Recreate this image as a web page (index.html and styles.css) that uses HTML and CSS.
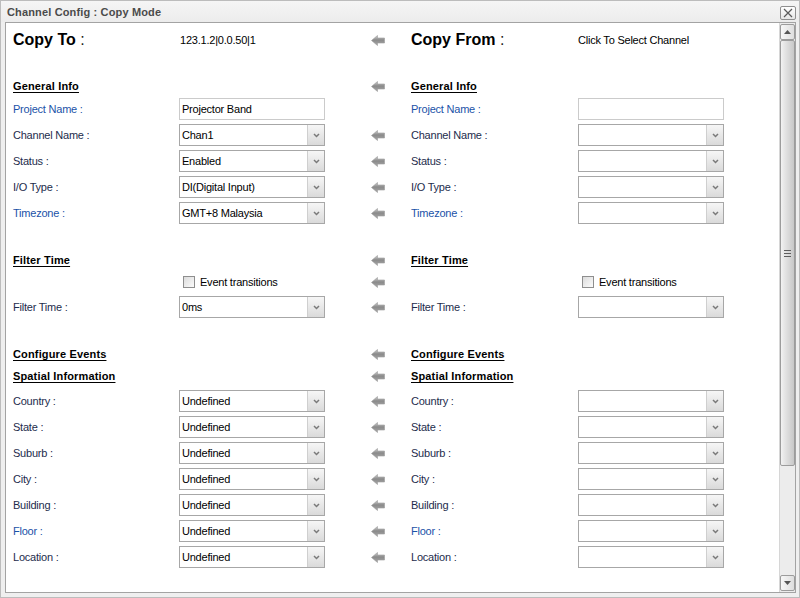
FILE: index.html
```html
<!DOCTYPE html>
<html>
<head>
<meta charset="utf-8">
<link rel="stylesheet" href="styles.css">
</head>
<body>
<div class="window">
  <div class="titlebar">
    <span class="title">Channel Config : Copy Mode</span>
    <div class="close"><svg width="10" height="10" viewBox="0 0 10 10"><path d="M1 1 L9 9 M9 1 L1 9" stroke="#5a5a5a" stroke-width="1.2" fill="none"/></svg></div>
  </div>
  <div class="panel">
    <div class="content">
      <div class="row top">
        <div class="lc big"><b>Copy To</b> :</div>
        <div class="lf val">123.1.2|0.0.50|1</div>
        <div class="ar"><svg class="arrow" width="14" height="11" viewBox="0 0 14 11"><use href="#arr"/></svg></div>
        <div class="rc big"><b>Copy From</b> :</div>
        <div class="rf val rv">Click To Select Channel</div>
      </div>

      <div class="row head gi">
        <div class="lc h">General Info</div>
        <div class="ar"><svg class="arrow" width="14" height="11" viewBox="0 0 14 11"><use href="#arr"/></svg></div>
        <div class="rc h">General Info</div>
      </div>
      <div class="row field first">
        <div class="lc lbl blue">Project Name :</div>
        <div class="lf"><div class="input">Projector Band</div></div>
        <div class="rc lbl blue">Project Name :</div>
        <div class="rf"><div class="input"></div></div>
      </div>
      <div class="row field">
        <div class="lc lbl">Channel Name :</div>
        <div class="lf"><div class="select"><span class="txt">Chan1</span><span class="btn"><svg width="7" height="5" viewBox="0 0 7 5"><use href="#chev"/></svg></span></div></div>
        <div class="ar"><svg class="arrow" width="14" height="11" viewBox="0 0 14 11"><use href="#arr"/></svg></div>
        <div class="rc lbl">Channel Name :</div>
        <div class="rf"><div class="select"><span class="txt"></span><span class="btn"><svg width="7" height="5" viewBox="0 0 7 5"><use href="#chev"/></svg></span></div></div>
      </div>
      <div class="row field">
        <div class="lc lbl">Status :</div>
        <div class="lf"><div class="select"><span class="txt">Enabled</span><span class="btn"><svg width="7" height="5" viewBox="0 0 7 5"><use href="#chev"/></svg></span></div></div>
        <div class="ar"><svg class="arrow" width="14" height="11" viewBox="0 0 14 11"><use href="#arr"/></svg></div>
        <div class="rc lbl">Status :</div>
        <div class="rf"><div class="select"><span class="txt"></span><span class="btn"><svg width="7" height="5" viewBox="0 0 7 5"><use href="#chev"/></svg></span></div></div>
      </div>
      <div class="row field">
        <div class="lc lbl">I/O Type :</div>
        <div class="lf"><div class="select"><span class="txt">DI(Digital Input)</span><span class="btn"><svg width="7" height="5" viewBox="0 0 7 5"><use href="#chev"/></svg></span></div></div>
        <div class="ar"><svg class="arrow" width="14" height="11" viewBox="0 0 14 11"><use href="#arr"/></svg></div>
        <div class="rc lbl">I/O Type :</div>
        <div class="rf"><div class="select"><span class="txt"></span><span class="btn"><svg width="7" height="5" viewBox="0 0 7 5"><use href="#chev"/></svg></span></div></div>
      </div>
      <div class="row field">
        <div class="lc lbl blue">Timezone :</div>
        <div class="lf"><div class="select"><span class="txt">GMT+8 Malaysia</span><span class="btn"><svg width="7" height="5" viewBox="0 0 7 5"><use href="#chev"/></svg></span></div></div>
        <div class="ar"><svg class="arrow" width="14" height="11" viewBox="0 0 14 11"><use href="#arr"/></svg></div>
        <div class="rc lbl blue">Timezone :</div>
        <div class="rf"><div class="select"><span class="txt"></span><span class="btn"><svg width="7" height="5" viewBox="0 0 7 5"><use href="#chev"/></svg></span></div></div>
      </div>

      <div class="row head sec">
        <div class="lc h">Filter Time</div>
        <div class="ar"><svg class="arrow" width="14" height="11" viewBox="0 0 14 11"><use href="#arr"/></svg></div>
        <div class="rc h">Filter Time</div>
      </div>
      <div class="row head after">
        <div class="lf chk"><span class="box"></span>Event transitions</div>
        <div class="ar"><svg class="arrow" width="14" height="11" viewBox="0 0 14 11"><use href="#arr"/></svg></div>
        <div class="rf chk"><span class="box"></span>Event transitions</div>
      </div>
      <div class="row field">
        <div class="lc lbl">Filter Time :</div>
        <div class="lf"><div class="select"><span class="txt">0ms</span><span class="btn"><svg width="7" height="5" viewBox="0 0 7 5"><use href="#chev"/></svg></span></div></div>
        <div class="ar"><svg class="arrow" width="14" height="11" viewBox="0 0 14 11"><use href="#arr"/></svg></div>
        <div class="rc lbl">Filter Time :</div>
        <div class="rf"><div class="select"><span class="txt"></span><span class="btn"><svg width="7" height="5" viewBox="0 0 7 5"><use href="#chev"/></svg></span></div></div>
      </div>

      <div class="row head sec">
        <div class="lc h">Configure Events</div>
        <div class="ar"><svg class="arrow" width="14" height="11" viewBox="0 0 14 11"><use href="#arr"/></svg></div>
        <div class="rc h">Configure Events</div>
      </div>
      <div class="row head after">
        <div class="lc h">Spatial Information</div>
        <div class="ar"><svg class="arrow" width="14" height="11" viewBox="0 0 14 11"><use href="#arr"/></svg></div>
        <div class="rc h">Spatial Information</div>
      </div>
      <div class="row field">
        <div class="lc lbl">Country :</div>
        <div class="lf"><div class="select"><span class="txt">Undefined</span><span class="btn"><svg width="7" height="5" viewBox="0 0 7 5"><use href="#chev"/></svg></span></div></div>
        <div class="ar"><svg class="arrow" width="14" height="11" viewBox="0 0 14 11"><use href="#arr"/></svg></div>
        <div class="rc lbl">Country :</div>
        <div class="rf"><div class="select"><span class="txt"></span><span class="btn"><svg width="7" height="5" viewBox="0 0 7 5"><use href="#chev"/></svg></span></div></div>
      </div>
      <div class="row field">
        <div class="lc lbl">State :</div>
        <div class="lf"><div class="select"><span class="txt">Undefined</span><span class="btn"><svg width="7" height="5" viewBox="0 0 7 5"><use href="#chev"/></svg></span></div></div>
        <div class="ar"><svg class="arrow" width="14" height="11" viewBox="0 0 14 11"><use href="#arr"/></svg></div>
        <div class="rc lbl">State :</div>
        <div class="rf"><div class="select"><span class="txt"></span><span class="btn"><svg width="7" height="5" viewBox="0 0 7 5"><use href="#chev"/></svg></span></div></div>
      </div>
      <div class="row field">
        <div class="lc lbl">Suburb :</div>
        <div class="lf"><div class="select"><span class="txt">Undefined</span><span class="btn"><svg width="7" height="5" viewBox="0 0 7 5"><use href="#chev"/></svg></span></div></div>
        <div class="ar"><svg class="arrow" width="14" height="11" viewBox="0 0 14 11"><use href="#arr"/></svg></div>
        <div class="rc lbl">Suburb :</div>
        <div class="rf"><div class="select"><span class="txt"></span><span class="btn"><svg width="7" height="5" viewBox="0 0 7 5"><use href="#chev"/></svg></span></div></div>
      </div>
      <div class="row field">
        <div class="lc lbl">City :</div>
        <div class="lf"><div class="select"><span class="txt">Undefined</span><span class="btn"><svg width="7" height="5" viewBox="0 0 7 5"><use href="#chev"/></svg></span></div></div>
        <div class="ar"><svg class="arrow" width="14" height="11" viewBox="0 0 14 11"><use href="#arr"/></svg></div>
        <div class="rc lbl">City :</div>
        <div class="rf"><div class="select"><span class="txt"></span><span class="btn"><svg width="7" height="5" viewBox="0 0 7 5"><use href="#chev"/></svg></span></div></div>
      </div>
      <div class="row field">
        <div class="lc lbl">Building :</div>
        <div class="lf"><div class="select"><span class="txt">Undefined</span><span class="btn"><svg width="7" height="5" viewBox="0 0 7 5"><use href="#chev"/></svg></span></div></div>
        <div class="ar"><svg class="arrow" width="14" height="11" viewBox="0 0 14 11"><use href="#arr"/></svg></div>
        <div class="rc lbl">Building :</div>
        <div class="rf"><div class="select"><span class="txt"></span><span class="btn"><svg width="7" height="5" viewBox="0 0 7 5"><use href="#chev"/></svg></span></div></div>
      </div>
      <div class="row field">
        <div class="lc lbl blue">Floor :</div>
        <div class="lf"><div class="select"><span class="txt">Undefined</span><span class="btn"><svg width="7" height="5" viewBox="0 0 7 5"><use href="#chev"/></svg></span></div></div>
        <div class="ar"><svg class="arrow" width="14" height="11" viewBox="0 0 14 11"><use href="#arr"/></svg></div>
        <div class="rc lbl blue">Floor :</div>
        <div class="rf"><div class="select"><span class="txt"></span><span class="btn"><svg width="7" height="5" viewBox="0 0 7 5"><use href="#chev"/></svg></span></div></div>
      </div>
      <div class="row field">
        <div class="lc lbl">Location :</div>
        <div class="lf"><div class="select"><span class="txt">Undefined</span><span class="btn"><svg width="7" height="5" viewBox="0 0 7 5"><use href="#chev"/></svg></span></div></div>
        <div class="ar"><svg class="arrow" width="14" height="11" viewBox="0 0 14 11"><use href="#arr"/></svg></div>
        <div class="rc lbl">Location :</div>
        <div class="rf"><div class="select"><span class="txt"></span><span class="btn"><svg width="7" height="5" viewBox="0 0 7 5"><use href="#chev"/></svg></span></div></div>
      </div>
    </div>
    <div class="scrollbar">
      <div class="sbtn"><svg width="7" height="4" viewBox="0 0 7 4"><path d="M0 4 L3.5 0 L7 4 Z" fill="#555"/></svg></div>
      <div class="track">
        <div class="thumb"><span class="grip"></span></div>
      </div>
      <div class="sbtn"><svg width="7" height="4" viewBox="0 0 7 4"><path d="M0 0 L3.5 4 L7 0 Z" fill="#555"/></svg></div>
    </div>
  </div>
</div>
<svg class="defs" width="0" height="0">
  <defs>
    <linearGradient id="ag" x1="0" y1="0" x2="0" y2="1">
      <stop offset="0" stop-color="#d0d0d0"/>
      <stop offset="0.45" stop-color="#8a8a8a"/>
      <stop offset="1" stop-color="#a8a8a8"/>
    </linearGradient>
    <g id="arr"><path d="M0.5 5.5 L6.5 0.5 L6.5 3 L13.5 3 L13.5 8 L6.5 8 L6.5 10.5 Z" fill="url(#ag)" stroke="#9a9a9a" stroke-width="0.6"/></g>
    <g id="chev"><path d="M1 1 L3.5 3.5 L6 1" fill="none" stroke="#7a7a7a" stroke-width="1.5"/></g>
  </defs>
</svg>
</body>
</html>
```
FILE: styles.css
```css
html, body {
  margin: 0;
  padding: 0;
}
body {
  font-family: "Liberation Sans", Arial, sans-serif;
  font-size: 11px;
  letter-spacing: -0.22px;
  color: #000;
  background: #f0f0f0;
}
.defs {
  position: absolute;
  width: 0;
  height: 0;
}
.window {
  width: 800px;
  height: 598px;
  box-sizing: border-box;
  border: 1px solid #bcbcbc;
  background: #efefef;
  display: flex;
  flex-direction: column;
}
.titlebar {
  height: 21px;
  flex: none;
  display: flex;
  align-items: center;
  justify-content: space-between;
  padding: 0 3px 0 6px;
  background: linear-gradient(#f5f5f5, #ececec);
}
.title {
  font-weight: bold;
  font-size: 11px;
  letter-spacing: 0.15px;
  color: #4b4b4b;
}
.close {
  width: 16px;
  height: 14px;
  box-sizing: border-box;
  border: 1px solid #8f8f8f;
  border-radius: 2px;
  background: linear-gradient(#ffffff, #e6e6e6);
  display: flex;
  align-items: center;
  justify-content: center;
  margin-top: 3px;
}
.close svg { display: block; }
.panel {
  height: 571px;
  margin: 0 3px 0 4px;
  box-sizing: border-box;
  border: 1px solid #a3a3a3;
  background: #fff;
  display: flex;
}
.content {
  flex: 1;
  padding: 5px 0 0 7px;
  display: flex;
  flex-direction: column;
}
.row {
  display: grid;
  grid-template-columns: 166px 146px 46px 14px 26px 167px 146px;
  align-items: center;
}
.lc { grid-column: 1; }
.lf { grid-column: 2; }
.ar { grid-column: 4; display: flex; }
.rc { grid-column: 6; }
.rf { grid-column: 7; }
.arrow { display: block; }

.row.top { height: 24px; }
.big {
  font-size: 16px;
  letter-spacing: 0;
  color: #222;
  white-space: nowrap;
}
.big b { color: #000; }
.val { padding-left: 1px; white-space: nowrap; }
.val.rv { padding-left: 0; }

.row.head { height: 20px; }
.row.gi { margin-top: 24px; }
.row.sec { margin-top: 26px; }
.row.after { margin-top: 2px; }
.row.field { height: 22px; margin-top: 4px; }
.row.field.first { margin-top: 2px; }

.h {
  font-weight: bold;
  letter-spacing: 0.15px;
  text-decoration: underline;
  text-underline-offset: 2px;
  white-space: nowrap;
}
.lbl { color: #1d2c4c; white-space: nowrap; }
.lbl.blue { color: #1b52a8; }

.input {
  height: 22px;
  box-sizing: border-box;
  border: 1px solid #cbcbcb;
  padding-left: 2px;
  line-height: 20px;
}
.select {
  height: 22px;
  box-sizing: border-box;
  border: 1px solid #a7a7a7;
  display: flex;
}
.select .txt {
  flex: 1;
  padding-left: 2px;
  line-height: 20px;
  white-space: nowrap;
  overflow: hidden;
}
.select .btn {
  width: 16px;
  border-left: 1px solid #cfcfcf;
  background: linear-gradient(#f6f6f6, #dadada);
  display: flex;
  align-items: center;
  justify-content: center;
}
.select .btn svg { display: block; }

.chk {
  display: flex;
  align-items: center;
  padding-left: 4px;
  white-space: nowrap;
}
.box {
  width: 12px;
  height: 12px;
  box-sizing: border-box;
  border: 1px solid #8e8e8e;
  background: linear-gradient(135deg, #dcdcdc, #fbfbfb);
  margin-right: 5px;
}

.scrollbar {
  width: 16px;
  flex: none;
  display: flex;
  flex-direction: column;
  background: #ececec;
  border-left: 1px solid #d6d6d6;
  box-sizing: border-box;
  padding: 1px 0;
}
.sbtn {
  height: 16px;
  flex: none;
  box-sizing: border-box;
  border: 1px solid #9c9c9c;
  border-radius: 2px;
  background: linear-gradient(to right, #f7f7f7, #dedede);
  display: flex;
  align-items: center;
  justify-content: center;
}
.sbtn svg { display: block; }
.track {
  flex: 1;
  display: flex;
  flex-direction: column;
}
.thumb {
  height: 426px;
  box-sizing: border-box;
  border: 1px solid #9c9c9c;
  border-radius: 2px;
  background: linear-gradient(to right, #f2f2f2 0%, #e4e4e4 30%, #d4d4d4 70%, #c8c8c8 100%);
  display: flex;
  align-items: center;
  justify-content: center;
}
.grip {
  width: 7px;
  height: 7px;
  background: repeating-linear-gradient(#5e5e5e 0 1px, transparent 1px 3px);
}
```
